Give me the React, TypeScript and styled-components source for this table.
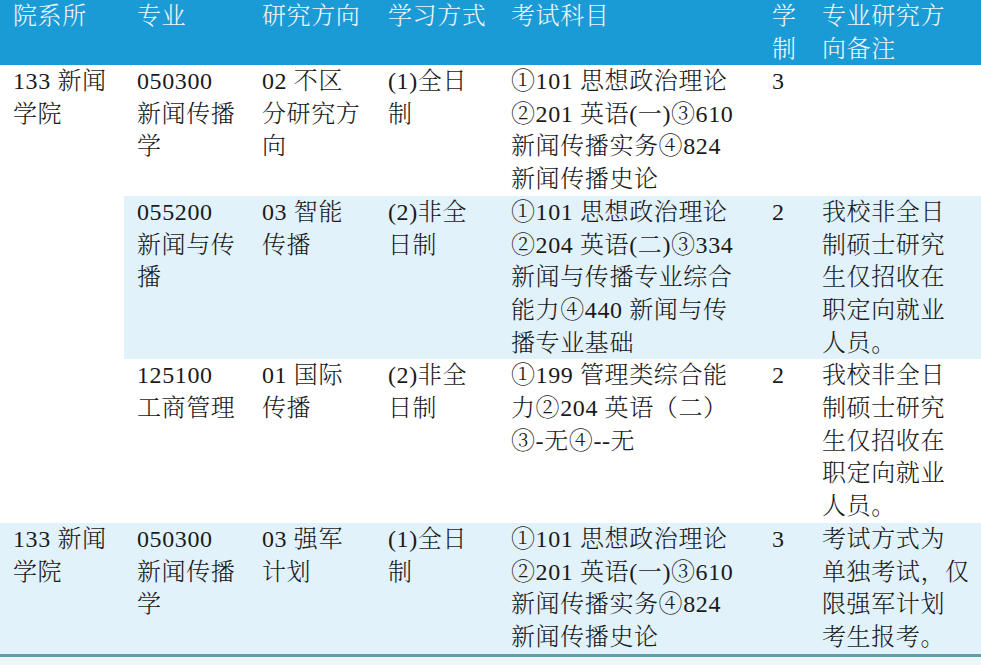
import React from "react";
import styled, { createGlobalStyle } from "styled-components";

const Global = createGlobalStyle`
  html, body {
    margin: 0;
    padding: 0;
    background: #eef7f7;
  }
  #root {
    width: 981px;
  }
`;

const FONT = `"Liberation Serif", "Noto Serif CJK SC", "Noto Sans CJK SC", serif`;

const Table = styled.table`
  width: 981px;
  border-collapse: collapse;
  table-layout: fixed;
  font-family: ${FONT};
  border-bottom: 3px solid #5d9fa5;
`;

const HeadRow = styled.tr`
  background: #1b9bd5;
  height: 65px;
`;

const HeadCell = styled.th`
  padding: 0 0 0 13px;
  text-align: left;
  vertical-align: top;
  font-weight: 300;
  font-size: 24px;
  line-height: 32.5px;
  letter-spacing: 0.6px;
  color: #f1f6fa;
  white-space: nowrap;
`;

const BodyRow = styled.tr``;

const Cell = styled.td<{ $shade?: boolean }>`
  padding: 0 0 0 13px;
  vertical-align: top;
  font-size: 24px;
  font-weight: 300;
  line-height: 32.7px;
  letter-spacing: 0.6px;
  color: #1a1a1a;
  background: ${(p) => (p.$shade ? "#e2f2fb" : "#ffffff")};
  white-space: nowrap;
  overflow: hidden;
`;

const Line = styled.span`
  display: block;
`;

const widths = [124, 125, 126, 123, 261, 50, 172];

const headers: string[][] = [
  ["院系所"],
  ["专业"],
  ["研究方向"],
  ["学习方式"],
  ["考试科目"],
  ["学", "制"],
  ["专业研究方", "向备注"],
];

type Row = {
  shade: boolean;
  first?: { lines: string[]; span: number };
  cells: string[][];
};

const rows: Row[] = [
  {
    shade: false,
    first: { lines: ["133 新闻", "学院"], span: 3 },
    cells: [
      ["050300", "新闻传播", "学"],
      ["02 不区", "分研究方", "向"],
      ["(1)全日", "制"],
      ["①101 思想政治理论", "②201 英语(一)③610", "新闻传播实务④824", "新闻传播史论"],
      ["3"],
      [],
    ],
  },
  {
    shade: true,
    cells: [
      ["055200", "新闻与传", "播"],
      ["03 智能", "传播"],
      ["(2)非全", "日制"],
      ["①101 思想政治理论", "②204 英语(二)③334", "新闻与传播专业综合", "能力④440 新闻与传", "播专业基础"],
      ["2"],
      ["我校非全日", "制硕士研究", "生仅招收在", "职定向就业", "人员。"],
    ],
  },
  {
    shade: false,
    cells: [
      ["125100", "工商管理"],
      ["01 国际", "传播"],
      ["(2)非全", "日制"],
      ["①199 管理类综合能", "力②204 英语（二）", "③-无④--无"],
      ["2"],
      ["我校非全日", "制硕士研究", "生仅招收在", "职定向就业", "人员。"],
    ],
  },
  {
    shade: true,
    first: { lines: ["133 新闻", "学院"], span: 1 },
    cells: [
      ["050300", "新闻传播", "学"],
      ["03 强军", "计划"],
      ["(1)全日", "制"],
      ["①101 思想政治理论", "②201 英语(一)③610", "新闻传播实务④824", "新闻传播史论"],
      ["3"],
      ["考试方式为", "单独考试，仅", "限强军计划", "考生报考。"],
    ],
  },
];

const Lines = ({ lines }: { lines: string[] }) => (
  <>
    {lines.map((l, i) => (
      <Line key={i}>{l}</Line>
    ))}
  </>
);

export default function App() {
  return (
    <>
      <Global />
      <Table>
        <colgroup>
          {widths.map((w, i) => (
            <col key={i} style={{ width: w }} />
          ))}
        </colgroup>
        <thead>
          <HeadRow>
            {headers.map((h, i) => (
              <HeadCell key={i}>
                <Lines lines={h} />
              </HeadCell>
            ))}
          </HeadRow>
        </thead>
        <tbody>
          {rows.map((r, ri) => (
            <BodyRow key={ri}>
              {r.first && (
                <Cell rowSpan={r.first.span} $shade={r.shade}>
                  <Lines lines={r.first.lines} />
                </Cell>
              )}
              {r.cells.map((c, ci) => (
                <Cell key={ci} $shade={r.shade}>
                  <Lines lines={c} />
                </Cell>
              ))}
            </BodyRow>
          ))}
        </tbody>
      </Table>
    </>
  );
}
